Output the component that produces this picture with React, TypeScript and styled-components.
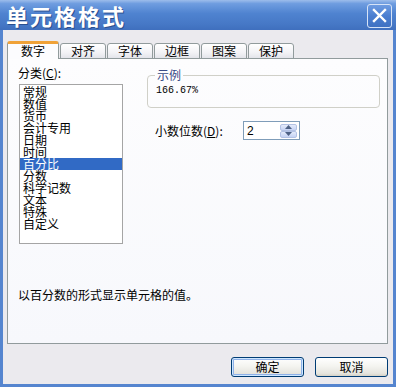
import styled, { createGlobalStyle } from 'styled-components';

const GlobalStyle = createGlobalStyle`
  html, body {
    margin: 0;
    padding: 0;
    background: #ffffff;
  }
  body {
    font-family: "Noto Sans CJK SC", "Liberation Sans", sans-serif;
    font-size: 12px;
    color: #000;
  }
`;

const Window = styled.div`
  width: 396px;
  height: 387px;
  display: flex;
  flex-direction: column;
  overflow: hidden;
`;

const TitleBar = styled.div`
  height: 30px;
  flex-shrink: 0;
  display: flex;
  align-items: center;
  justify-content: space-between;
  padding: 0 4px 0 6px;
  box-sizing: border-box;
  background: linear-gradient(
    to bottom,
    #9dbdeb 0%,
    #6f9de0 12%,
    #4f83d0 45%,
    #4678c6 80%,
    #3f6fbe 100%
  );
`;

const Title = styled.div`
  color: #ffffff;
  font-size: 22px;
  font-weight: 700;
  line-height: 30px;
  letter-spacing: 2px;
  white-space: nowrap;
  text-shadow: 1px 1px 0 #2a4f8e;
`;

const CloseButton = styled.div`
  width: 25px;
  height: 24px;
  margin-top: 1px;
  border: 1px solid #d6e3f7;
  border-radius: 3px;
  box-sizing: border-box;
  background: linear-gradient(to bottom, #6e9ce2 0%, #4a7ed0 50%, #3f71c2 100%);
  display: flex;
  align-items: center;
  justify-content: center;

  svg {
    width: 15px;
    height: 15px;
  }
`;

const Frame = styled.div`
  flex: 1;
  display: flex;
  flex-direction: column;
  background: #ebeaee;
  border: 3px solid #5585cf;
  border-top: none;
  padding: 11px 5px 7px 4px;
`;

const TabStrip = styled.div`
  height: 18px;
  display: flex;
  align-items: flex-end;
  margin-bottom: -1px;
  position: relative;
  z-index: 1;
`;

const Tab = styled.div<{ $active?: boolean; $w: number }>`
  width: ${({ $w }) => $w}px;
  height: ${({ $active }) => ($active ? 18 : 16)}px;
  box-sizing: border-box;
  margin-right: 1px;
  border: 1px solid #919b9c;
  border-bottom: ${({ $active }) => ($active ? 'none' : '1px solid #919b9c')};
  border-top: ${({ $active }) => ($active ? '3px solid #f0a238' : '1px solid #919b9c')};
  border-radius: 3px 3px 0 0;
  background: ${({ $active }) =>
    $active ? '#fcfcfe' : 'linear-gradient(to bottom, #ffffff 0%, #f3f3f6 60%, #e3e4ea 100%)'};
  display: flex;
  align-items: center;
  justify-content: center;
  font-size: 12px;
  line-height: 12px;
  padding-bottom: ${({ $active }) => ($active ? 1 : 0)}px;
`;

const Pane = styled.div`
  height: 286px;
  box-sizing: border-box;
  border: 1px solid #919b9c;
  background: linear-gradient(to bottom, #fdfdfe 0%, #f7f8fc 100%);
  display: flex;
  flex-direction: column;
  padding: 8px 7px 0 10px;
`;

const PaneTop = styled.div`
  display: flex;
  gap: 24px;
`;

const LeftCol = styled.div`
  display: flex;
  flex-direction: column;
  gap: 5px;
`;

const FieldLabel = styled.div`
  font-size: 12px;
  line-height: 12px;
  white-space: nowrap;

  u {
    text-decoration: underline;
  }
`;

const ListBox = styled.div`
  width: 104px;
  height: 160px;
  margin-left: 1px;
  box-sizing: border-box;
  border: 1px solid #a5a5a5;
  background: #ffffff;
  padding-top: 1px;
`;

const ListItem = styled.div<{ $selected?: boolean }>`
  height: 12px;
  line-height: 12px;
  font-size: 12px;
  padding-left: 3px;
  background: ${({ $selected }) => ($selected ? '#316ac5' : 'transparent')};
  color: ${({ $selected }) => ($selected ? '#ffffff' : '#000000')};
`;

const RightCol = styled.div`
  flex: 1;
  display: flex;
  flex-direction: column;
  padding-top: 2px;
`;

const GroupBox = styled.fieldset`
  margin: 0;
  height: 39px;
  box-sizing: border-box;
  border: 1px solid #d0d0c8;
  border-radius: 4px;
  padding: 4px 8px 0 8px;
  min-width: 0;
`;

const GroupLegend = styled.legend`
  font-size: 12px;
  line-height: 12px;
  padding: 0 2px;
  margin-left: -1px;
  color: #384a86;
`;

const SampleValue = styled.div`
  font-family: "Liberation Mono", "DejaVu Sans Mono", monospace;
  font-size: 10px;
  line-height: 12px;
`;

const SpinRow = styled.div`
  display: flex;
  align-items: center;
  margin-top: 13px;
  padding-left: 8px;
`;

const SpinLabel = styled(FieldLabel)`
  width: 88px;
`;

const SpinBox = styled.div`
  width: 57px;
  height: 19px;
  box-sizing: border-box;
  border: 1px solid #7f9db9;
  background: #ffffff;
  display: flex;
  align-items: center;
  justify-content: space-between;
  padding: 0 2px 0 3px;
`;

const SpinValue = styled.span`
  font-family: "Liberation Sans", sans-serif;
  font-size: 12px;
  line-height: 12px;
`;

const SpinButtons = styled.div`
  display: flex;
  flex-direction: column;
  width: 17px;
`;

const SpinButton = styled.div`
  height: 7px;
  box-sizing: border-box;
  border: 1px solid #b3c2e4;
  border-radius: 2px;
  background: linear-gradient(to bottom, #e4ebfb 0%, #c5d3f4 100%);
  display: flex;
  align-items: center;
  justify-content: center;

  svg {
    width: 7px;
    height: 4px;
  }
`;

const Description = styled.div`
  margin-top: auto;
  margin-bottom: 42px;
  font-size: 12px;
  line-height: 12px;
`;

const ButtonRow = styled.div`
  display: flex;
  justify-content: flex-end;
  gap: 11px;
  margin-top: 13px;
`;

const DialogButton = styled.div<{ $default?: boolean }>`
  width: 73px;
  height: 20px;
  box-sizing: border-box;
  border: 1px solid #003c74;
  border-radius: 3px;
  background: linear-gradient(to bottom, #ffffff 0%, #f4f4f0 45%, #e6e5df 85%, #d6d2c6 100%);
  box-shadow: ${({ $default }) =>
    $default ? 'inset 0 0 0 1px #cee7ff, inset 0 0 0 2px #8fb1e8' : 'none'};
  display: flex;
  align-items: center;
  justify-content: center;
  font-size: 12px;
  line-height: 12px;
`;

const tabs = [
  { label: '数字', w: 52, active: true },
  { label: '对齐', w: 46 },
  { label: '字体', w: 46 },
  { label: '边框', w: 46 },
  { label: '图案', w: 46 },
  { label: '保护', w: 46 },
];

const categories = [
  '常规',
  '数值',
  '货币',
  '会计专用',
  '日期',
  '时间',
  '百分比',
  '分数',
  '科学记数',
  '文本',
  '特殊',
  '自定义',
];

export default function App() {
  return (
    <>
      <GlobalStyle />
      <Window>
        <TitleBar>
          <Title>单元格格式</Title>
          <CloseButton>
            <svg viewBox="0 0 15 15">
              <path d="M2 2 L13 13 M13 2 L2 13" stroke="#ffffff" strokeWidth="2.4" strokeLinecap="square" />
            </svg>
          </CloseButton>
        </TitleBar>
        <Frame>
          <TabStrip>
            {tabs.map((t) => (
              <Tab key={t.label} $active={t.active} $w={t.w}>
                {t.label}
              </Tab>
            ))}
          </TabStrip>
          <Pane>
            <PaneTop>
              <LeftCol>
                <FieldLabel>
                  分类(<u>C</u>):
                </FieldLabel>
                <ListBox>
                  {categories.map((c) => (
                    <ListItem key={c} $selected={c === '百分比'}>
                      {c}
                    </ListItem>
                  ))}
                </ListBox>
              </LeftCol>
              <RightCol>
                <GroupBox>
                  <GroupLegend>示例</GroupLegend>
                  <SampleValue>166.67%</SampleValue>
                </GroupBox>
                <SpinRow>
                  <SpinLabel>
                    小数位数(<u>D</u>):
                  </SpinLabel>
                  <SpinBox>
                    <SpinValue>2</SpinValue>
                    <SpinButtons>
                      <SpinButton>
                        <svg viewBox="0 0 7 4">
                          <path d="M0 4 L3.5 0 L7 4 Z" fill="#4d6185" />
                        </svg>
                      </SpinButton>
                      <SpinButton>
                        <svg viewBox="0 0 7 4">
                          <path d="M0 0 L7 0 L3.5 4 Z" fill="#4d6185" />
                        </svg>
                      </SpinButton>
                    </SpinButtons>
                  </SpinBox>
                </SpinRow>
              </RightCol>
            </PaneTop>
            <Description>以百分数的形式显示单元格的值。</Description>
          </Pane>
          <ButtonRow>
            <DialogButton $default>确定</DialogButton>
            <DialogButton>取消</DialogButton>
          </ButtonRow>
        </Frame>
      </Window>
    </>
  );
}
